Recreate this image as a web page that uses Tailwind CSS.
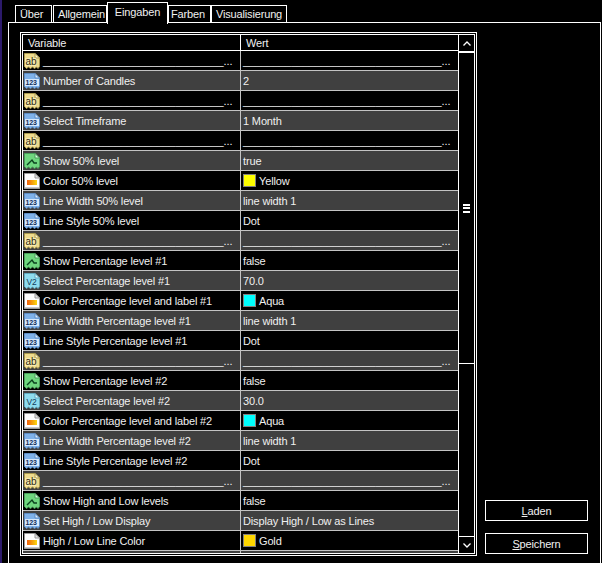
<!DOCTYPE html>
<html lang="de">
<head>
<meta charset="utf-8">
<title>Eingaben</title>
<script src="https://cdn.jsdelivr.net/npm/@tailwindcss/browser@4"></script>
</head>
<body class="bg-black">
<svg width="0" height="0" class="absolute">
  <defs>
    <linearGradient id="band" x1="0" x2="1" y1="0" y2="0">
      <stop offset="0" stop-color="#f0600c"/><stop offset="1" stop-color="#fbd80f"/>
    </linearGradient>
    <symbol id="ab" viewBox="0 0 16 16">
      <path d="M.5.5H11L15.5 5V13.5L14 15.5 12.5 14 10.5 15.5 8.5 14 6.5 15.5 4.5 14 2.5 15.5.5 13.5Z" fill="#eedb8e" stroke="#a8994f"/>
      <path d="M11 .5V5H15.5Z" fill="#fff6cf" stroke="#a8994f"/>
      <rect x="1" y="5" width="11" height="8" fill="#f7eab0"/>
      <text x="1.5" y="11.5" font-family="Liberation Sans" font-size="10" fill="#2e2a10">ab</text>
    </symbol>
    <symbol id="num" viewBox="0 0 16 16">
      <path d="M.5.5H11L15.5 5V13.5L14 15.5 12.5 14 10.5 15.5 8.5 14 6.5 15.5 4.5 14 2.5 15.5.5 13.5Z" fill="#7fb2ea" stroke="#5f8cc0"/>
      <path d="M11 .5V5H15.5Z" fill="#dcecff" stroke="#5f8cc0"/>
      <rect x="1" y="6" width="14" height="7" fill="#d6e8fb"/>
      <text x="1.6" y="12.1" font-family="Liberation Sans" font-size="7" font-weight="700" fill="#0d2c5c">123</text>
    </symbol>
    <symbol id="dbl" viewBox="0 0 16 16">
      <path d="M.5.5H11L15.5 5V13.5L14 15.5 12.5 14 10.5 15.5 8.5 14 6.5 15.5 4.5 14 2.5 15.5.5 13.5Z" fill="#8fdcee" stroke="#62a8bc"/>
      <path d="M11 .5V5H15.5Z" fill="#e0f8ff" stroke="#62a8bc"/>
      <text x="2.5" y="12" font-family="Liberation Sans" font-size="8.5" fill="#123c58">V2</text>
    </symbol>
    <symbol id="bool" viewBox="0 0 16 16">
      <path d="M.5.5H11L15.5 5V13.5L14 15.5 12.5 14 10.5 15.5 8.5 14 6.5 15.5 4.5 14 2.5 15.5.5 13.5Z" fill="#6fd67f" stroke="#4a9c5a"/>
      <path d="M11 .5V5H15.5Z" fill="#d8ffe0" stroke="#4a9c5a"/>
      <path d="M3 12 8 7 10 10H13" fill="none" stroke="#0c4420" stroke-width="1.4"/>
    </symbol>
    <symbol id="clr" viewBox="0 0 16 16">
      <path d="M.5.5H11L15.5 5V15.5H.5Z" fill="#fff" stroke="#9a9a9a"/>
      <path d="M11 .5V5H15.5Z" fill="#e8e8e8" stroke="#9a9a9a"/>
      <rect x="3" y="7" width="10" height="5" fill="url(#band)"/>
      <rect x="1" y="14" width="14" height="1" fill="#c8c8c8"/>
    </symbol>
  </defs>
</svg>

<div class="w-[602px] h-[563px] overflow-hidden bg-black border-l-2 border-[#2c1a6b] font-['Liberation_Sans',sans-serif] text-[11px] tracking-[-0.15px] leading-[14px] text-[#f0f0f0]">

  <div class="flex items-end h-[22px] pl-[13px]">
    <div class="w-[37px] h-[17px] mr-px pl-[4px] border border-b-0 border-white flex items-center">Über</div>
    <div class="w-[54px] h-[17px] pl-[4px] border border-b-0 border-white flex items-center">Allgemein</div>
    <div class="relative z-10 -mb-[2px] w-[61px] h-[22px] pb-[3px] bg-black border border-b-0 border-white flex items-center justify-center">Eingaben</div>
    <div class="w-[43px] h-[17px] pl-[2px] border border-b-0 border-white flex items-center">Farben</div>
    <div class="w-[76px] h-[17px] border border-b-0 border-white flex items-center justify-center">Visualisierung</div>
  </div>

  <div class="ml-[6px] w-[593px] h-[600px] border-l border-r border-t border-white pt-[9px] pl-[11px] flex items-start">
    <div class="w-[457px] h-[524px] border border-white p-px shrink-0">
      <div class="h-[520px] border border-white flex overflow-hidden">

        <div class="w-[435px] shrink-0 overflow-hidden">
          <div class="grid grid-cols-[218px_217px] h-[16px] border-b border-white items-center">
            <div class="h-full border-r border-white pl-[5px] flex items-center">Variable</div>
            <div class="pl-[5px]">Wert</div>
          </div>

          <div class="grid grid-cols-[218px_217px] h-[20px] border-b border-[#c4c4c4] bg-black">
            <div class="flex items-center h-full border-r border-[#c4c4c4] pl-[1px]"><svg class="w-4 h-4 shrink-0"><use href="#ab"/></svg><span class="ml-[3px] whitespace-nowrap tracking-[-0.1px]">______________________________...</span></div>
            <div class="flex items-center pl-[2px] whitespace-nowrap tracking-[-0.1px]">_________________________________...</div>
          </div>
          <div class="grid grid-cols-[218px_217px] h-[20px] border-b border-[#c4c4c4] bg-[#404040]">
            <div class="flex items-center h-full border-r border-[#c4c4c4] pl-[1px]"><svg class="w-4 h-4 shrink-0"><use href="#num"/></svg><span class="ml-[3px]">Number of Candles</span></div>
            <div class="flex items-center pl-[2px]">2</div>
          </div>
          <div class="grid grid-cols-[218px_217px] h-[20px] border-b border-[#c4c4c4] bg-black">
            <div class="flex items-center h-full border-r border-[#c4c4c4] pl-[1px]"><svg class="w-4 h-4 shrink-0"><use href="#ab"/></svg><span class="ml-[3px] whitespace-nowrap tracking-[-0.1px]">______________________________...</span></div>
            <div class="flex items-center pl-[2px] whitespace-nowrap tracking-[-0.1px]">_________________________________...</div>
          </div>
          <div class="grid grid-cols-[218px_217px] h-[20px] border-b border-[#c4c4c4] bg-[#404040]">
            <div class="flex items-center h-full border-r border-[#c4c4c4] pl-[1px]"><svg class="w-4 h-4 shrink-0"><use href="#num"/></svg><span class="ml-[3px]">Select Timeframe</span></div>
            <div class="flex items-center pl-[2px]">1 Month</div>
          </div>
          <div class="grid grid-cols-[218px_217px] h-[20px] border-b border-[#c4c4c4] bg-black">
            <div class="flex items-center h-full border-r border-[#c4c4c4] pl-[1px]"><svg class="w-4 h-4 shrink-0"><use href="#ab"/></svg><span class="ml-[3px] whitespace-nowrap tracking-[-0.1px]">______________________________...</span></div>
            <div class="flex items-center pl-[2px] whitespace-nowrap tracking-[-0.1px]">_________________________________...</div>
          </div>
          <div class="grid grid-cols-[218px_217px] h-[20px] border-b border-[#c4c4c4] bg-[#404040]">
            <div class="flex items-center h-full border-r border-[#c4c4c4] pl-[1px]"><svg class="w-4 h-4 shrink-0"><use href="#bool"/></svg><span class="ml-[3px]">Show 50% level</span></div>
            <div class="flex items-center pl-[2px]">true</div>
          </div>
          <div class="grid grid-cols-[218px_217px] h-[20px] border-b border-[#c4c4c4] bg-black">
            <div class="flex items-center h-full border-r border-[#c4c4c4] pl-[1px]"><svg class="w-4 h-4 shrink-0"><use href="#clr"/></svg><span class="ml-[3px]">Color 50% level</span></div>
            <div class="flex items-center pl-[2px]"><span class="w-[13px] h-[13px] border border-[#808080] bg-[#ffff00] mr-[3px]"></span>Yellow</div>
          </div>
          <div class="grid grid-cols-[218px_217px] h-[20px] border-b border-[#c4c4c4] bg-[#404040]">
            <div class="flex items-center h-full border-r border-[#c4c4c4] pl-[1px]"><svg class="w-4 h-4 shrink-0"><use href="#num"/></svg><span class="ml-[3px]">Line Width 50% level</span></div>
            <div class="flex items-center pl-[2px]">line width 1</div>
          </div>
          <div class="grid grid-cols-[218px_217px] h-[20px] border-b border-[#c4c4c4] bg-black">
            <div class="flex items-center h-full border-r border-[#c4c4c4] pl-[1px]"><svg class="w-4 h-4 shrink-0"><use href="#num"/></svg><span class="ml-[3px]">Line Style 50% level</span></div>
            <div class="flex items-center pl-[2px]">Dot</div>
          </div>
          <div class="grid grid-cols-[218px_217px] h-[20px] border-b border-[#c4c4c4] bg-[#404040]">
            <div class="flex items-center h-full border-r border-[#c4c4c4] pl-[1px]"><svg class="w-4 h-4 shrink-0"><use href="#ab"/></svg><span class="ml-[3px] whitespace-nowrap tracking-[-0.1px]">______________________________...</span></div>
            <div class="flex items-center pl-[2px] whitespace-nowrap tracking-[-0.1px]">_________________________________...</div>
          </div>
          <div class="grid grid-cols-[218px_217px] h-[20px] border-b border-[#c4c4c4] bg-black">
            <div class="flex items-center h-full border-r border-[#c4c4c4] pl-[1px]"><svg class="w-4 h-4 shrink-0"><use href="#bool"/></svg><span class="ml-[3px]">Show Percentage level #1</span></div>
            <div class="flex items-center pl-[2px]">false</div>
          </div>
          <div class="grid grid-cols-[218px_217px] h-[20px] border-b border-[#c4c4c4] bg-[#404040]">
            <div class="flex items-center h-full border-r border-[#c4c4c4] pl-[1px]"><svg class="w-4 h-4 shrink-0"><use href="#dbl"/></svg><span class="ml-[3px]">Select Percentage level #1</span></div>
            <div class="flex items-center pl-[2px]">70.0</div>
          </div>
          <div class="grid grid-cols-[218px_217px] h-[20px] border-b border-[#c4c4c4] bg-black">
            <div class="flex items-center h-full border-r border-[#c4c4c4] pl-[1px]"><svg class="w-4 h-4 shrink-0"><use href="#clr"/></svg><span class="ml-[3px]">Color Percentage level and label #1</span></div>
            <div class="flex items-center pl-[2px]"><span class="w-[13px] h-[13px] border border-[#808080] bg-[#00ffff] mr-[3px]"></span>Aqua</div>
          </div>
          <div class="grid grid-cols-[218px_217px] h-[20px] border-b border-[#c4c4c4] bg-[#404040]">
            <div class="flex items-center h-full border-r border-[#c4c4c4] pl-[1px]"><svg class="w-4 h-4 shrink-0"><use href="#num"/></svg><span class="ml-[3px]">Line Width Percentage level #1</span></div>
            <div class="flex items-center pl-[2px]">line width 1</div>
          </div>
          <div class="grid grid-cols-[218px_217px] h-[20px] border-b border-[#c4c4c4] bg-black">
            <div class="flex items-center h-full border-r border-[#c4c4c4] pl-[1px]"><svg class="w-4 h-4 shrink-0"><use href="#num"/></svg><span class="ml-[3px]">Line Style Percentage level #1</span></div>
            <div class="flex items-center pl-[2px]">Dot</div>
          </div>
          <div class="grid grid-cols-[218px_217px] h-[20px] border-b border-[#c4c4c4] bg-[#404040]">
            <div class="flex items-center h-full border-r border-[#c4c4c4] pl-[1px]"><svg class="w-4 h-4 shrink-0"><use href="#ab"/></svg><span class="ml-[3px] whitespace-nowrap tracking-[-0.1px]">______________________________...</span></div>
            <div class="flex items-center pl-[2px] whitespace-nowrap tracking-[-0.1px]">_________________________________...</div>
          </div>
          <div class="grid grid-cols-[218px_217px] h-[20px] border-b border-[#c4c4c4] bg-black">
            <div class="flex items-center h-full border-r border-[#c4c4c4] pl-[1px]"><svg class="w-4 h-4 shrink-0"><use href="#bool"/></svg><span class="ml-[3px]">Show Percentage level #2</span></div>
            <div class="flex items-center pl-[2px]">false</div>
          </div>
          <div class="grid grid-cols-[218px_217px] h-[20px] border-b border-[#c4c4c4] bg-[#404040]">
            <div class="flex items-center h-full border-r border-[#c4c4c4] pl-[1px]"><svg class="w-4 h-4 shrink-0"><use href="#dbl"/></svg><span class="ml-[3px]">Select Percentage level #2</span></div>
            <div class="flex items-center pl-[2px]">30.0</div>
          </div>
          <div class="grid grid-cols-[218px_217px] h-[20px] border-b border-[#c4c4c4] bg-black">
            <div class="flex items-center h-full border-r border-[#c4c4c4] pl-[1px]"><svg class="w-4 h-4 shrink-0"><use href="#clr"/></svg><span class="ml-[3px]">Color Percentage level and label #2</span></div>
            <div class="flex items-center pl-[2px]"><span class="w-[13px] h-[13px] border border-[#808080] bg-[#00ffff] mr-[3px]"></span>Aqua</div>
          </div>
          <div class="grid grid-cols-[218px_217px] h-[20px] border-b border-[#c4c4c4] bg-[#404040]">
            <div class="flex items-center h-full border-r border-[#c4c4c4] pl-[1px]"><svg class="w-4 h-4 shrink-0"><use href="#num"/></svg><span class="ml-[3px]">Line Width Percentage level #2</span></div>
            <div class="flex items-center pl-[2px]">line width 1</div>
          </div>
          <div class="grid grid-cols-[218px_217px] h-[20px] border-b border-[#c4c4c4] bg-black">
            <div class="flex items-center h-full border-r border-[#c4c4c4] pl-[1px]"><svg class="w-4 h-4 shrink-0"><use href="#num"/></svg><span class="ml-[3px]">Line Style Percentage level #2</span></div>
            <div class="flex items-center pl-[2px]">Dot</div>
          </div>
          <div class="grid grid-cols-[218px_217px] h-[20px] border-b border-[#c4c4c4] bg-[#404040]">
            <div class="flex items-center h-full border-r border-[#c4c4c4] pl-[1px]"><svg class="w-4 h-4 shrink-0"><use href="#ab"/></svg><span class="ml-[3px] whitespace-nowrap tracking-[-0.1px]">______________________________...</span></div>
            <div class="flex items-center pl-[2px] whitespace-nowrap tracking-[-0.1px]">_________________________________...</div>
          </div>
          <div class="grid grid-cols-[218px_217px] h-[20px] border-b border-[#c4c4c4] bg-black">
            <div class="flex items-center h-full border-r border-[#c4c4c4] pl-[1px]"><svg class="w-4 h-4 shrink-0"><use href="#bool"/></svg><span class="ml-[3px]">Show High and Low levels</span></div>
            <div class="flex items-center pl-[2px]">false</div>
          </div>
          <div class="grid grid-cols-[218px_217px] h-[20px] border-b border-[#c4c4c4] bg-[#404040]">
            <div class="flex items-center h-full border-r border-[#c4c4c4] pl-[1px]"><svg class="w-4 h-4 shrink-0"><use href="#num"/></svg><span class="ml-[3px]">Set High / Low Display</span></div>
            <div class="flex items-center pl-[2px]">Display High / Low as Lines</div>
          </div>
          <div class="grid grid-cols-[218px_217px] h-[20px] border-b border-[#c4c4c4] bg-black">
            <div class="flex items-center h-full border-r border-[#c4c4c4] pl-[1px]"><svg class="w-4 h-4 shrink-0"><use href="#clr"/></svg><span class="ml-[3px]">High / Low Line Color</span></div>
            <div class="flex items-center pl-[2px]"><span class="w-[13px] h-[13px] border border-[#808080] bg-[#ffd700] mr-[3px]"></span>Gold</div>
          </div>
          <div class="grid grid-cols-[218px_217px] h-[20px] bg-[#404040]">
            <div class="flex items-center h-full border-r border-[#c4c4c4] pl-[1px]"><svg class="w-4 h-4 shrink-0"><use href="#num"/></svg></div>
            <div></div>
          </div>
        </div>

        <div class="w-[16px] shrink-0 border-l border-white flex flex-col">
          <div class="h-[18px] border-b-2 border-white flex items-center justify-center">
            <svg class="w-[8px] h-[5px]" viewBox="0 0 8 5"><path d="M.5 4.5 4 1 7.5 4.5" fill="none" stroke="#fff" stroke-width="1.3"/></svg>
          </div>
          <div class="h-[311px] border-b border-white flex items-center justify-center">
            <div class="w-[7px] h-[9px] flex flex-col justify-between">
              <div class="h-[2px] bg-white"></div><div class="h-[2px] bg-white"></div><div class="h-[2px] bg-white"></div>
            </div>
          </div>
          <div class="flex-1"></div>
          <div class="h-[17px] border-t border-white flex items-center justify-center">
            <svg class="w-[8px] h-[5px]" viewBox="0 0 8 5"><path d="M.5.5 4 4 7.5.5" fill="none" stroke="#fff" stroke-width="1.3"/></svg>
          </div>
        </div>

      </div>
    </div>

    <div class="ml-[8px] h-[524px] flex flex-col justify-end gap-[12px] pb-[2px]">
      <div class="w-[103px] h-[21px] border border-white flex items-center justify-center"><span><span class="underline">L</span>aden</span></div>
      <div class="w-[103px] h-[21px] border border-white flex items-center justify-center"><span><span class="underline">S</span>peichern</span></div>
    </div>
  </div>
</div>
</body>
</html>
